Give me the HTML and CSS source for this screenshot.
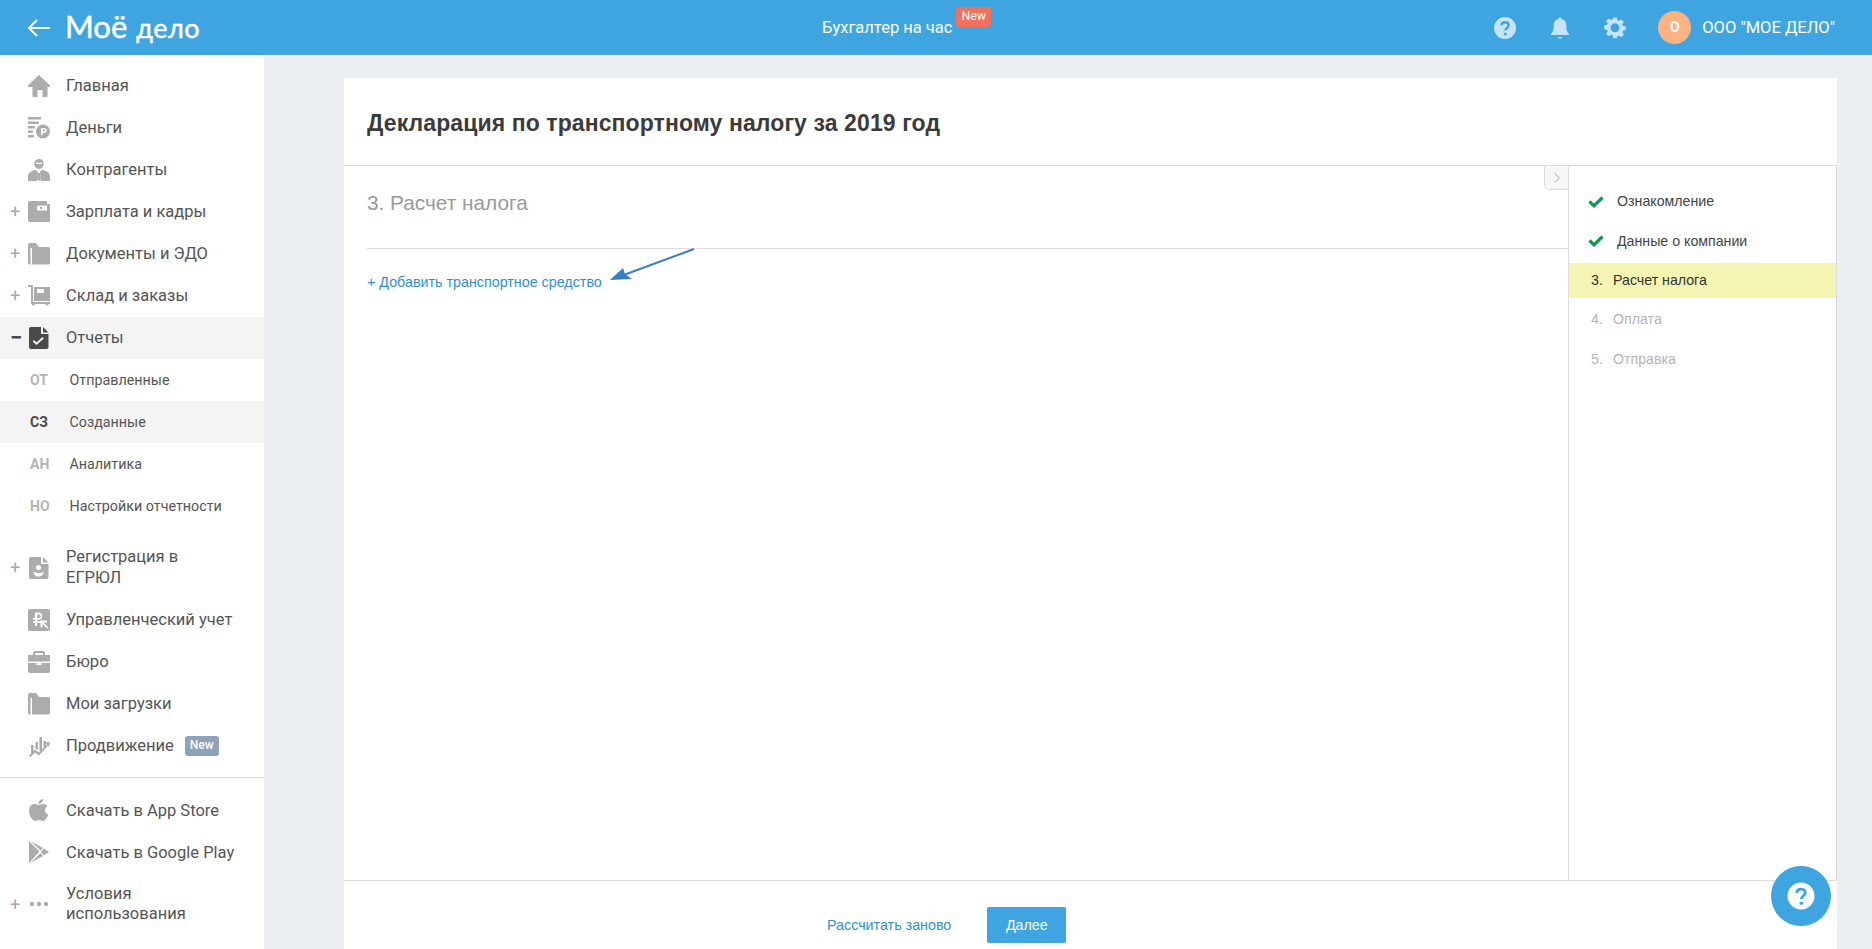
FILE: index.html
```html
<!DOCTYPE html>
<html lang="ru">
<head>
<meta charset="utf-8">
<title>Моё дело</title>
<link rel="stylesheet" href="styles.css">
</head>
<body>
<header class="topbar">
  <div class="brand">
    <svg class="back" viewBox="0 0 24 20" width="24" height="20"><path d="M23 10H2M10 2l-8 8 8 8" fill="none" stroke="#fff" stroke-width="2"/></svg>
    <span class="logo">Моё<span class="logo-small">дело</span></span>
  </div>
  <div class="service">
    <span>Бухгалтер на час</span>
    <span class="badge-red">New</span>
  </div>
  <div class="tools">
    <svg class="tool" viewBox="0 0 24 24" width="24" height="24"><circle cx="12" cy="12" r="11" fill="#c5e4f8"/><path d="M8.500 9.300c.2-2.100 1.700-3.100 3.600-3.100 2 0 3.500 1.200 3.500 3 0 2.600-3.200 2.700-3.200 5.300" fill="none" stroke="#3ea5e0" stroke-width="2.400"/><circle cx="12.300" cy="18" r="1.500" fill="#3ea5e0"/></svg>
    <svg class="tool" viewBox="0 0 24 24" width="24" height="24"><path d="M12 1.500c1 0 1.600.6 1.700 1.500 3.100.8 4.600 3.300 4.600 6.500 0 4.700 1 6.700 2.700 8.500v1H3v-1c1.700-1.800 2.700-3.800 2.700-8.500 0-3.200 1.500-5.700 4.600-6.500.1-.9.700-1.500 1.700-1.500z" fill="#c5e4f8"/><path d="M9.700 21h4.600c-.3 1-1.200 1.600-2.300 1.600s-2-.6-2.300-1.600z" fill="#c5e4f8"/></svg>
    <svg class="tool" viewBox="0 0 24 24" width="24" height="24"><path fill-rule="evenodd" d="M10 1h4l.6 3.100 1.800.8L19 3.100 21.900 6l-1.800 2.600.8 1.800L24 11v4l-3.100.6-.8 1.800 1.800 2.600-2.900 2.900-2.600-1.800-1.800.8L14 24h-4l-.6-3.100-1.800-.8L5 21.900 2.100 19l1.800-2.600-.8-1.800L0 14v-4l3.100-.6.8-1.800L2.100 5 5 2.100l2.600 1.800 1.800-.8zM12 7.500a5 5 0 1 0 0 10 5 5 0 0 0 0-10z" fill="#c5e4f8" transform="translate(1.200 .6) scale(.9)"/></svg>
    <span class="avatar">О</span>
    <span class="company">ООО "МОЕ ДЕЛО"</span>
  </div>
</header>

<div class="layout">
  <nav class="sidebar">
    <a class="item"><span class="sign"></span>
      <svg class="ico" viewBox="0 0 22 22"><path d="M11 0 22 10.500v1.500h-2.500v9a1 1 0 0 1-1 1h-4v-7h-5v7h-4a1 1 0 0 1-1-1v-9H0v-1.500z"/></svg>
      <span class="label">Главная</span></a>
    <a class="item"><span class="sign"></span>
      <svg class="ico" viewBox="0 0 22 22"><path d="M0 0h13v2.500H0zM0 4.500h11v2.500H0zM0 9h7v2.500H0zM0 13.500h5V16H0zM0 18h6v2.500H0z"/><path fill-rule="evenodd" d="M15 7.500a7 7 0 1 1 0 14 7 7 0 0 1 0-14zM13 11v7h1.600v-2h1.500a2.500 2.500 0 0 0 0-5zm1.600 1.400h1.300a1.100 1.100 0 0 1 0 2.200h-1.300z"/></svg>
      <span class="label">Деньги</span></a>
    <a class="item"><span class="sign"></span>
      <svg class="ico" viewBox="0 0 22 22"><path fill-rule="evenodd" d="M11 0c2.800 0 4.700 1.900 4.700 4.500S13.800 10 11 10 6.300 7.100 6.300 4.500 8.200 0 11 0zM8 3.500v1.300c1 .4 5 .4 6 0V3.500c-1.500.6-4.500.6-6 0z"/><path d="M7.500 10.800 10 13l-1 7.500V22H0v-5c0-3.500 4-5 7.500-6.200zM14.500 10.800 12 13l1 7.500V22h9v-5c0-3.500-4-5-7.500-6.200zM10 14h2l.8 6.500-1.800 1.500-1.800-1.500z"/></svg>
      <span class="label">Контрагенты</span></a>
    <a class="item"><span class="sign">+</span>
      <svg class="ico" viewBox="0 0 22 22"><path fill-rule="evenodd" d="M2 0h17v3h3v17a1 1 0 0 1-1 1H2a2 2 0 0 1-2-2V2a2 2 0 0 1 2-2zm8.500 4.500A1.500 1.500 0 0 0 9 6v2a1.500 1.500 0 0 0 1.500 1.500H19V4.500zm1.500 1.500h2v2h-2z"/></svg>
      <span class="label">Зарплата и кадры</span></a>
    <a class="item"><span class="sign">+</span>
      <svg class="ico" viewBox="0 0 22 22"><path d="M1.500 0H8l3 4h9.500A1.500 1.500 0 0 1 22 5.500V20a1.500 1.500 0 0 1-1.500 1.500H4V5H2.500v16.500h-1A1.500 1.500 0 0 1 0 20V1.500A1.500 1.500 0 0 1 1.500 0z"/></svg>
      <span class="label">Документы и ЭДО</span></a>
    <a class="item"><span class="sign">+</span>
      <svg class="ico" viewBox="0 0 22 22"><path fill-rule="evenodd" d="M0 0h4a1 1 0 0 1 1 1v16h17v2h-1.500a1.500 1.500 0 1 1-3 0H7a1.500 1.500 0 1 1-3 0 1 1 0 0 1-1-1V2H0zM6 2h16v14H6zm3 2v4h7V4z"/></svg>
      <span class="label">Склад и заказы</span></a>
    <a class="item active"><span class="sign">−</span>
      <svg class="ico dark" viewBox="0 0 22 22"><path fill-rule="evenodd" d="M3 0h10v6a1 1 0 0 0 1 1h6.500v13a2 2 0 0 1-2 2H3a2 2 0 0 1-2-2V2a2 2 0 0 1 2-2zm12 0 5.500 5.500H15zM14.500 10l-6 5.500-2.500-2.400-1.300 1.400 3.800 3.600 7.300-6.700z"/></svg>
      <span class="label">Отчеты</span></a>
    <ul class="sub">
      <li class="sub-item"><b>ОТ</b><span>Отправленные</span></li>
      <li class="sub-item current"><b>СЗ</b><span>Созданные</span></li>
      <li class="sub-item"><b>АН</b><span>Аналитика</span></li>
      <li class="sub-item"><b>НО</b><span>Настройки отчетности</span></li>
    </ul>
    <a class="item wrap"><span class="sign">+</span>
      <svg class="ico" viewBox="0 0 22 22"><path fill-rule="evenodd" d="M3 0h10v6a1 1 0 0 0 1 1h6.500v13a2 2 0 0 1-2 2H3a2 2 0 0 1-2-2V2a2 2 0 0 1 2-2zm12 0 5.500 5.500H15zM10.500 8a2.500 2.500 0 1 0 0 5 2.500 2.500 0 0 0 0-5zm-5 6.500c0 3 2 5 5 5s5-2 5-5c-1.500 1-3 1.500-5 1.500s-3.500-.5-5-1.500z"/></svg>
      <span class="label">Регистрация в<br>ЕГРЮЛ</span></a>
    <a class="item"><span class="sign"></span>
      <svg class="ico" viewBox="0 0 22 22"><path fill-rule="evenodd" d="M2 0h18a2 2 0 0 1 2 2v18a2 2 0 0 1-2 2H2a2 2 0 0 1-2-2V2a2 2 0 0 1 2-2zm5 3.500V9H5v1.800h2v1.400H5V14h2v3h2.200v-3h3.300v-1.800H9.200v-1.400h1.800a3.700 3.700 0 0 0 0-7.300zm2.200 1.900H11a1.800 1.800 0 0 1 0 3.600H9.200zM12.500 11.500v6.700h1.900v-3.300l4.600 4.600 1.300-1.300-4.600-4.600h3.300v-2z"/></svg>
      <span class="label">Управленческий учет</span></a>
    <a class="item"><span class="sign"></span>
      <svg class="ico" viewBox="0 0 22 22"><path fill-rule="evenodd" d="M7 0h8a2 2 0 0 1 2 2v2h5v6.500H0V4h5V2a2 2 0 0 1 2-2zm0 2v2h8V2zM0 12h8.500v2h5v-2H22v8a2 2 0 0 1-2 2H2a2 2 0 0 1-2-2z"/></svg>
      <span class="label">Бюро</span></a>
    <a class="item"><span class="sign"></span>
      <svg class="ico" viewBox="0 0 22 22"><path d="M1.500 0H8l3 4h9.500A1.500 1.500 0 0 1 22 5.500V20a1.500 1.500 0 0 1-1.500 1.500H4V5H2.500v16.500h-1A1.500 1.500 0 0 1 0 20V1.500A1.500 1.500 0 0 1 1.500 0z"/></svg>
      <span class="label">Мои загрузки</span></a>
    <a class="item"><span class="sign"></span>
      <svg class="ico" viewBox="0 0 22 22"><path d="M3 10h2.500v7l-2.500 2zM7.500 7H10v8l-2.500-1.500zM11.500 2H14v13l-2.500 1.500zM15.500 6H18v5l-2.500 2zM1 20.500l6-6 4 3 8-8-2-1.500 5-1.500-1 5.500-1-1.500-9 10-4-3-5 5z"/></svg>
      <span class="label">Продвижение</span><span class="badge-gray">New</span></a>
    <hr class="divider">
    <a class="item"><span class="sign"></span>
      <svg class="ico" viewBox="0 0 22 22"><path d="M15 0c.2 2.600-2 5-4.500 4.800C10.300 2.500 12.500.2 15 0zM10.800 6c1.200 0 2.300-1 4.200-1 1.700 0 3.300.8 4.400 2.300-3.600 2-3 7.100.8 8.500-.9 2.300-2.800 6.200-5.200 6.200-1.300 0-2-.9-3.700-.9s-2.500.9-3.800.9C4.500 22 1 16.500 1 12c0-4.400 2.800-7 5.800-7 1.700 0 3 1 4 1z"/></svg>
      <span class="label">Скачать в App Store</span></a>
    <a class="item"><span class="sign"></span>
      <svg class="ico" viewBox="0 0 22 22"><path d="M1 0 11.500 10.500 1.200 22 1 21.500zM2.500 0 15 7l-2.500 2.500zM16 7.600 21 11l-5 3.300-3-3.300zM2.500 22 12.500 12l2.500 3z"/></svg>
      <span class="label">Скачать в Google Play</span></a>
    <a class="item wrap"><span class="sign">+</span>
      <svg class="ico" viewBox="0 0 22 22"><circle cx="4" cy="11" r="2.200"/><circle cx="11" cy="11" r="2.200"/><circle cx="18" cy="11" r="2.200"/></svg>
      <span class="label">Условия<br>использования</span></a>
  </nav>

  <main class="content">
    <section class="card">
      <h1 class="title">Декларация по транспортному налогу за 2019 год</h1>
      <div class="body">
        <div class="form">
          <h2 class="step-title">3. Расчет налога</h2>
          <a class="add-link">+ Добавить транспортное средство</a>
          <button class="toggle" type="button" aria-label="Свернуть"><svg viewBox="0 0 10 14" width="8" height="12"><path d="M2 1.500 8 7l-6 5.500" fill="none" stroke="#a5a5a5" stroke-width="1.200"/></svg></button>
        </div>
        <ol class="steps">
          <li class="step done"><svg class="check" viewBox="0 0 16 13" width="16" height="13"><path d="M1.500 6.500 6 10.800 14.500 2.500" fill="none" stroke="#0c9a50" stroke-width="3.200"/></svg><span>Ознакомление</span></li>
          <li class="step done"><svg class="check" viewBox="0 0 16 13" width="16" height="13"><path d="M1.500 6.500 6 10.800 14.500 2.500" fill="none" stroke="#0c9a50" stroke-width="3.200"/></svg><span>Данные о компании</span></li>
          <li class="step now"><i>3.</i><span>Расчет налога</span></li>
          <li class="step todo"><i>4.</i><span>Оплата</span></li>
          <li class="step todo"><i>5.</i><span>Отправка</span></li>
        </ol>
      </div>
      <footer class="actions">
        <a class="recalc">Рассчитать заново</a>
        <button class="next" type="button">Далее</button>
      </footer>
    </section>
  </main>
</div>

<svg class="arrow" viewBox="0 0 86 36" width="86" height="36"><path d="M85 1 12 28" stroke="#3a7fc0" stroke-width="2" fill="none"/><path d="M1 32 14 20l2 6 7 5z" fill="#3a7fc0"/></svg>
<button class="help" type="button" aria-label="Помощь"><svg viewBox="0 0 28 28" width="28" height="28"><circle cx="14" cy="14" r="13.500" fill="#fff"/><path d="M9.800 11c.2-2.500 2-3.800 4.300-3.800 2.400 0 4.200 1.400 4.200 3.500 0 3.100-3.900 3.200-3.900 6.300" fill="none" stroke="#3ea5e0" stroke-width="2.800"/><circle cx="14.400" cy="21.300" r="1.800" fill="#3ea5e0"/></svg></button>
</body>
</html>
```
FILE: styles.css
```css
* { box-sizing: border-box; }
html, body { height: 100%; margin: 0; }
body {
  display: flex;
  flex-direction: column;
  height: 949px;
  overflow: hidden;
  background: #ebeff3;
  font-family: Roboto, "Liberation Sans", sans-serif;
  color: #555;
}

/* top bar */
.topbar {
  flex: 0 0 55px;
  display: flex;
  align-items: center;
  background: #3ea5e0;
  color: #fff;
  font-size: 16.500px;
  overflow: hidden;
}
.brand {
  flex: 0 0 822px;
  display: flex;
  align-items: center;
  padding-left: 27px;
}
.back { margin-right: 14px; }
.logo {
  padding-bottom: 2px;
  font-family: Lato, sans-serif;
  font-size: 31px;
  line-height: 1;
  -webkit-text-stroke: .5px #fff;
  white-space: nowrap;
}
.logo-small { margin-left: 9px; font-size: 27px; letter-spacing: .5px; }
.service { display: flex; align-items: flex-start; }
.badge-red {
  margin: -11px 0 0 4px;
  padding: 0 5px;
  height: 20px;
  line-height: 19px;
  border-radius: 3px;
  background: #f4705b;
  font-size: 12.300px;
}
.tools {
  margin-left: auto;
  padding-right: 37px;
  display: flex;
  align-items: center;
}
.tool { margin-right: 31px; }
.avatar {
  width: 33px;
  height: 33px;
  border-radius: 50%;
  background: #fbb384;
  text-align: center;
  line-height: 33px;
  font-size: 14px;
  font-weight: 700;
}
.company { margin-left: 11px; white-space: nowrap; }

/* layout */
.layout { flex: 1; display: flex; min-height: 0; }
.sidebar {
  flex: 0 0 264px;
  padding-top: 9.500px;
  background: #fff;
  overflow: hidden;
}
.item {
  display: flex;
  align-items: center;
  padding: 10.500px 0;
  font-size: 16.500px;
  line-height: 21px;
  color: #555;
}
.item.wrap { line-height: 20.500px; }
.item.active { background: #f4f4f4; }
.sign {
  flex: 0 0 28px;
  padding-left: 10px;
  font-size: 18px;
  line-height: 21px;
  color: #aaa;
}
.active .sign { font-size: 22px; color: #4a4a4a; font-weight: 700; }
.ico { flex: 0 0 22px; width: 22px; height: 22px; margin: -1px 0; fill: #acacac; }
.ico.dark { fill: #4a4a4a; }
.label { margin-left: 16px; }
.badge-gray {
  margin-left: 11px;
  padding: 0 5px;
  height: 20px;
  line-height: 18px;
  border-radius: 3px;
  background: #8fa2b8;
  color: #fff;
  font-size: 12px;
  font-weight: 500;
}
.sub { margin: 0 0 10px; padding: 0; list-style: none; }
.sub-item {
  display: flex;
  align-items: center;
  height: 42px;
  padding-left: 30px;
  font-size: 14.300px;
}
.sub-item b { flex: 0 0 39.500px; font-size: 14px; font-weight: 700; color: #b4b4b4; }
.sub-item.current { background: #f4f4f4; }
.sub-item.current b { color: #4a4a4a; }
.divider { margin: 10px 0 11.500px; border: 0; border-top: 1px solid #ddd; }

/* main card */
.content {
  flex: 1;
  min-width: 0;
  padding: 23px 35px 0 80px;
}
.card {
  height: 100%;
  display: flex;
  flex-direction: column;
  background: #fff;
  font-family: "Liberation Sans", sans-serif;
}
.title {
  flex: 0 0 88px;
  margin: 0;
  padding: 4px 23px 0;
  line-height: 83px;
  border-bottom: 1px solid #ddd;
  font-size: 23px;
  letter-spacing: .1px;
  font-weight: 700;
  color: #3b3b3b;
}
.body { flex: 1; display: flex; min-height: 0; }
.form { position: relative; flex: 1; min-width: 0; padding-left: 23px; }
.step-title {
  margin: 0 0 31.500px;
  padding: 25px 0 25px;
  height: 83px;
  border-bottom: 1px solid #ddd;
  font-size: 20.800px;
  font-weight: 400;
  line-height: 24px;
  color: #999;
}
.add-link { display: block; margin-top: -8px; font-size: 14.300px; line-height: 18px; color: #2f8fd5; }
.toggle {
  position: absolute;
  top: 0;
  right: 0;
  width: 24px;
  height: 24px;
  padding: 0;
  display: flex;
  align-items: center;
  justify-content: center;
  border: 1px solid #ddd;
  border-width: 0 0 1px 1px;
  border-radius: 0 0 0 5px;
  background: #f6f6f6;
}
.steps {
  flex: 0 0 269px;
  margin: 0;
  padding: 15.500px 0 0;
  list-style: none;
  border-left: 1px solid #ddd;
  border-right: 1px solid #ddd;
  font-size: 14.200px;
}
.step {
  display: flex;
  align-items: center;
  height: 39.500px;
  padding-left: 19px;
  color: #444;
}
.step .check { margin-right: 13px; }
.step i { flex: 0 0 22px; font-style: normal; margin-left: 3px; }
.now { height: 35px; margin: 2px 0; background: #f5f5b3; color: #333; }
.todo { color: #b5b5b5; }
.actions {
  flex: 0 0 69px;
  display: flex;
  align-items: center;
  padding: 20px 0 0 483px;
  border-top: 1px solid #ddd;
}
.recalc { font-size: 14.300px; color: #2f8fd5; }
.next {
  margin-left: 36px;
  width: 79px;
  height: 36px;
  border: 0;
  border-radius: 2px;
  background: #3ea5e0;
  color: #fff;
  font: 14.300px "Liberation Sans", sans-serif;
}

/* overlays */
.arrow { position: absolute; left: 609px; top: 248px; }
.help {
  position: absolute;
  left: 1771px;
  top: 866px;
  width: 60px;
  height: 60px;
  padding: 0;
  display: flex;
  align-items: center;
  justify-content: center;
  border: 0;
  border-radius: 50%;
  background: #3ea5e0;
}
```
